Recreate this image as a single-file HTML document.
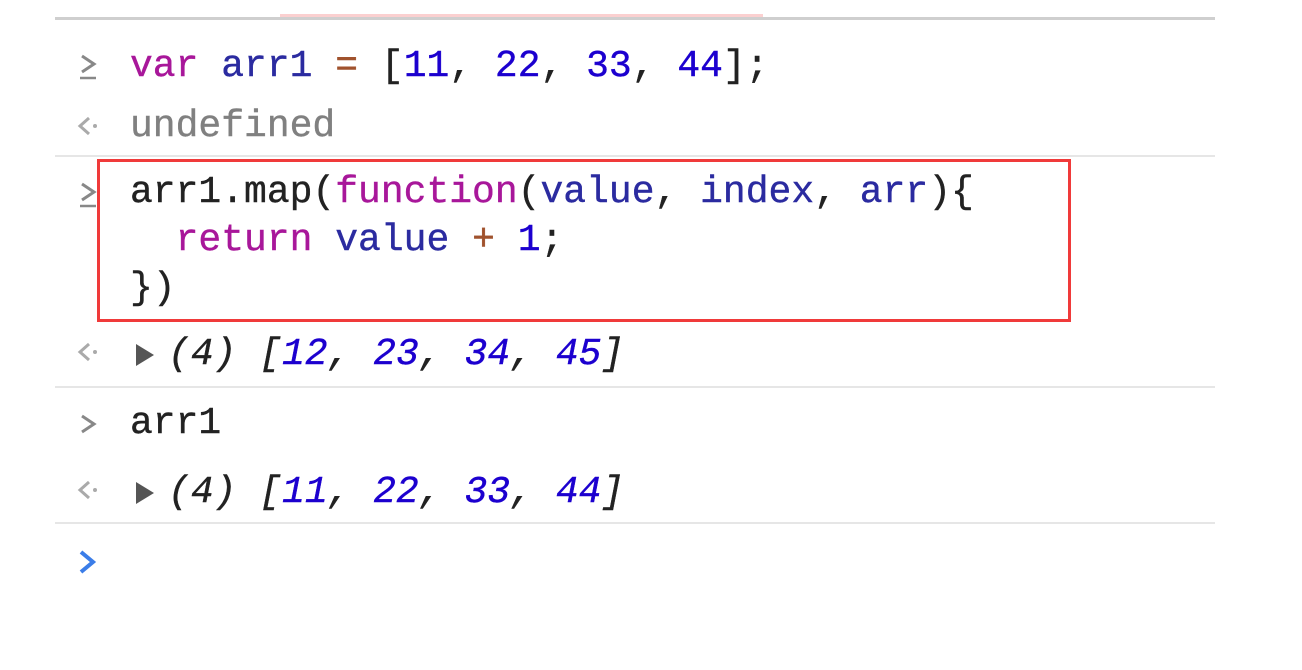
<!DOCTYPE html>
<html><head><style>
body{margin:0;width:1302px;height:670px;background:#fff;position:relative;overflow:hidden;font-family:"Liberation Mono",monospace;}
.l{position:absolute;left:130px;font-size:38px;line-height:48px;white-space:pre;color:#222;-webkit-text-stroke:0.4px currentColor;}
.hr{position:absolute;left:55px;width:1160px;height:2px;background:#e6e6e6;}
.k{color:#a8179a}.v{color:#2b2ba0}.n{color:#1c00cf}.o{color:#a0522d}.g{color:#808080}
.i{font-style:italic}
.sv{position:absolute;left:74px;}
.tri{position:absolute;left:136px;width:0;height:0;border-top:11px solid transparent;border-bottom:11px solid transparent;border-left:18px solid #555;}
</style></head><body>
<div style="position:absolute;left:55px;top:17px;width:1160px;height:3px;background:#cfcfcf"></div>
<div style="position:absolute;left:280px;top:14px;width:483px;height:3px;background:#fbd0d0"></div>

<svg class="sv" style="top:52px" width="26" height="30"><path d="M8 4 L20 12 L8 20" stroke="#888" stroke-width="3" fill="none"/><path d="M6 26 H22" stroke="#888" stroke-width="2.5"/></svg>
<div class="l" style="top:43px"><span class="k">var</span> <span class="v">arr1</span> <span class="o">=</span> [<span class="n">11</span>, <span class="n">22</span>, <span class="n">33</span>, <span class="n">44</span>];</div>

<svg class="sv" style="top:114px" width="26" height="26"><path d="M15 4 L6 12 L15 20" stroke="#aaa" stroke-width="3" fill="none"/><circle cx="21" cy="12" r="2" fill="#aaa"/></svg>
<div class="l g" style="top:103px">undefined</div>
<div class="hr" style="top:155px"></div>

<svg class="sv" style="top:180px" width="26" height="30"><path d="M8 4 L20 12 L8 20" stroke="#888" stroke-width="3" fill="none"/><path d="M6 26 H22" stroke="#888" stroke-width="2.5"/></svg>
<div class="l" style="top:169px">arr1.map(<span class="k">function</span>(<span class="v">value</span>, <span class="v">index</span>, <span class="v">arr</span>){</div>
<div class="l" style="top:217px">  <span class="k">return</span> <span class="v">value</span> <span class="o">+</span> <span class="n">1</span>;</div>
<div class="l" style="top:265px">})</div>
<div style="position:absolute;left:97px;top:159px;width:968px;height:157px;border:3px solid #f03a3a"></div>

<svg class="sv" style="top:340px" width="26" height="26"><path d="M15 4 L6 12 L15 20" stroke="#aaa" stroke-width="3" fill="none"/><circle cx="21" cy="12" r="2" fill="#aaa"/></svg>
<div class="tri" style="top:344px"></div>
<div class="l i" style="top:331px;left:168px">(4) [<span class="n">12</span>, <span class="n">23</span>, <span class="n">34</span>, <span class="n">45</span>]</div>
<div class="hr" style="top:386px"></div>

<svg class="sv" style="top:412px" width="26" height="26"><path d="M8 4 L20 12 L8 20" stroke="#888" stroke-width="3" fill="none"/></svg>
<div class="l" style="top:400px">arr1</div>

<svg class="sv" style="top:478px" width="26" height="26"><path d="M15 4 L6 12 L15 20" stroke="#aaa" stroke-width="3" fill="none"/><circle cx="21" cy="12" r="2" fill="#aaa"/></svg>
<div class="tri" style="top:482px"></div>
<div class="l i" style="top:469px;left:168px">(4) [<span class="n">11</span>, <span class="n">22</span>, <span class="n">33</span>, <span class="n">44</span>]</div>
<div class="hr" style="top:522px"></div>

<svg style="position:absolute;left:76px;top:548px" width="24" height="28"><path d="M5 4 L17 14 L5 24" stroke="#3b7de8" stroke-width="4" fill="none"/></svg>
</body></html>
